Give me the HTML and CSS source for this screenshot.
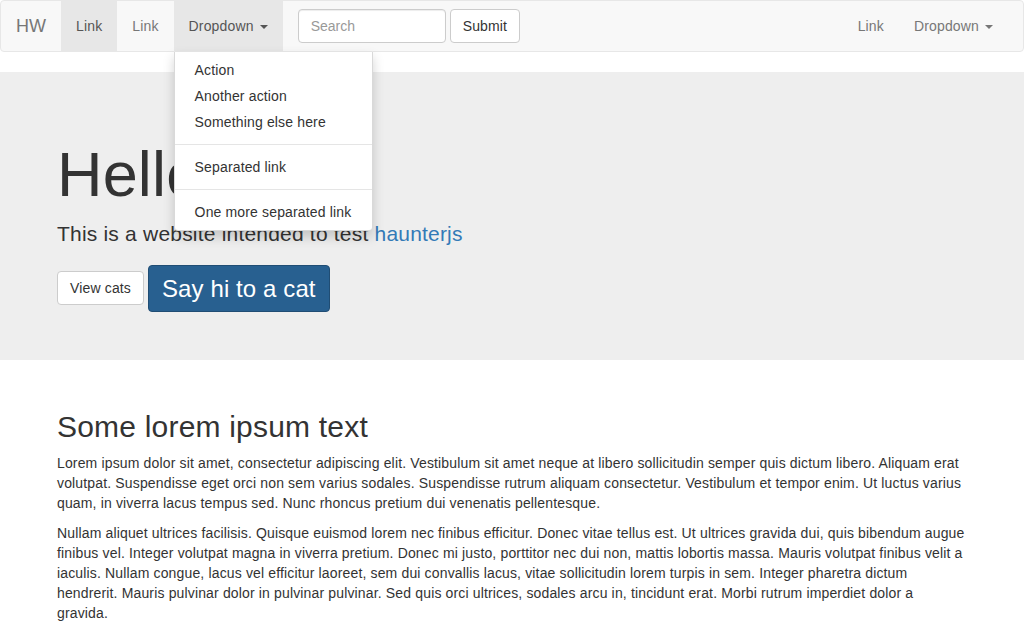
FILE: index.html
```html
<!DOCTYPE html>
<html lang="en">
<head>
<meta charset="utf-8">
<title>HW</title>
<link rel="stylesheet" href="styles.css">
</head>
<body>
<nav class="navbar">
  <a class="brand" href="#">HW</a>
  <ul class="nav">
    <li class="active"><a href="#">Link</a></li>
    <li><a href="#">Link</a></li>
    <li class="dropdown open">
      <a href="#">Dropdown <span class="caret"></span></a>
      <ul class="dropdown-menu">
        <li><a href="#">Action</a></li>
        <li><a href="#">Another action</a></li>
        <li><a href="#">Something else here</a></li>
        <li class="divider"></li>
        <li><a href="#">Separated link</a></li>
        <li class="divider"></li>
        <li><a href="#">One more separated link</a></li>
      </ul>
    </li>
  </ul>
  <form class="navbar-form">
    <input class="form-control" type="text" placeholder="Search">
    <button class="btn btn-default" type="submit">Submit</button>
  </form>
  <ul class="nav nav-right">
    <li><a href="#">Link</a></li>
    <li><a href="#">Dropdown <span class="caret"></span></a></li>
  </ul>
</nav>

<div class="jumbotron">
  <div class="container">
    <h1>Hello!</h1>
    <p class="lead">This is a website intended to test <a href="#">haunterjs</a></p>
    <div class="actions">
      <a class="btn btn-default" href="#">View cats</a>
      <a class="btn btn-primary btn-lg" href="#">Say hi to a cat</a>
    </div>
  </div>
</div>

<div class="container main">
  <h2>Some lorem ipsum text</h2>
  <p>Lorem ipsum dolor sit amet, consectetur adipiscing elit. Vestibulum sit amet neque at libero sollicitudin semper quis dictum libero. Aliquam erat volutpat. Suspendisse eget orci non sem varius sodales. Suspendisse rutrum aliquam consectetur. Vestibulum et tempor enim. Ut luctus varius quam, in viverra lacus tempus sed. Nunc rhoncus pretium dui venenatis pellentesque.</p>
  <p>Nullam aliquet ultrices facilisis. Quisque euismod lorem nec finibus efficitur. Donec vitae tellus est. Ut ultrices gravida dui, quis bibendum augue finibus vel. Integer volutpat magna in viverra pretium. Donec mi justo, porttitor nec dui non, mattis lobortis massa. Mauris volutpat finibus velit a iaculis. Nullam congue, lacus vel efficitur laoreet, sem dui convallis lacus, vitae sollicitudin lorem turpis in sem. Integer pharetra dictum hendrerit. Mauris pulvinar dolor in pulvinar pulvinar. Sed quis orci ultrices, sodales arcu in, tincidunt erat. Morbi rutrum imperdiet dolor a gravida.</p>
</div>
</body>
</html>
```

FILE: styles.css
```css
* { box-sizing: border-box; }
html, body { margin: 0; padding: 0; }
body {
  font-family: "Liberation Sans", Arial, Helvetica, sans-serif;
  font-size: 14px;
  line-height: 1.42857143;
  letter-spacing: 0.15px;
  color: #333;
  background: #fff;
}
a { text-decoration: none; }

/* Navbar */
.navbar {
  display: flex;
  align-items: stretch;
  height: 52px;
  background: #f8f8f8;
  border: 1px solid #e7e7e7;
  border-radius: 4px;
  margin-bottom: 20px;
  position: relative;
  z-index: 10;
}
.brand {
  display: block;
  height: 50px;
  padding: 15px;
  font-size: 18px;
  line-height: 20px;
  letter-spacing: 0;
  color: #777;
}
.nav {
  display: flex;
  list-style: none;
  margin: 0;
  padding: 0;
}
.nav > li { position: relative; }
.nav > li > a {
  display: block;
  padding: 15px;
  line-height: 20px;
  color: #777;
}
.nav > li.active > a,
.nav > li.open > a {
  color: #555;
  background: #e7e7e7;
}
.nav-right { margin-left: auto; margin-right: 15px; }
.caret {
  display: inline-block;
  width: 0;
  height: 0;
  margin-left: 2px;
  vertical-align: middle;
  border-top: 4px solid;
  border-left: 4px solid transparent;
  border-right: 4px solid transparent;
}

.navbar-form {
  display: flex;
  align-items: center;
  gap: 4px;
  margin: 0;
  padding: 0 15px;
}
.form-control {
  width: 148px;
  height: 34px;
  padding: 6px 12px;
  font: inherit;
  font-size: 14px;
  color: #555;
  background: #fff;
  border: 1px solid #ccc;
  border-radius: 4px;
  box-shadow: inset 0 1px 1px rgba(0,0,0,.075);
}
.form-control::placeholder { color: #999; }

.btn {
  display: inline-block;
  padding: 6px 12px;
  font-family: inherit;
  font-size: 14px;
  line-height: 20px;
  letter-spacing: inherit;
  border: 1px solid transparent;
  border-radius: 4px;
  cursor: pointer;
  white-space: nowrap;
}
.btn-default {
  color: #333;
  background: #fff;
  border-color: #ccc;
}
.btn-primary {
  color: #fff;
  background: #286090;
  border-color: #204d74;
}
.btn-lg {
  padding: 9px 13px;
  font-size: 24px;
  line-height: 27px;
  letter-spacing: 0.1px;
  border-radius: 4px;
}

/* Dropdown */
.dropdown-menu {
  position: absolute;
  top: 100%;
  left: 0;
  min-width: 199px;
  margin: 0;
  padding: 5px 0;
  list-style: none;
  background: #fff;
  border: 1px solid rgba(0,0,0,.15);
  border-top-color: #e3e3e3;
  border-radius: 0 0 4px 4px;
  box-shadow: 0 6px 12px rgba(0,0,0,.175);
}
.dropdown-menu > li > a {
  display: block;
  padding: 3px 20px;
  line-height: 20px;
  color: #333;
  white-space: nowrap;
}
.dropdown-menu .divider {
  height: 1px;
  margin: 9px 0;
  background: #e5e5e5;
}

/* Layout */
.container {
  width: 940px;
  margin: 0 auto;
  padding: 0 15px;
}
.main { display: flow-root; }

.jumbotron {
  background: #eee;
  padding: 48px 0;
  margin-bottom: 30px;
}
.jumbotron h1 {
  margin: 20px 0 10px;
  font-size: 63px;
  font-weight: 400;
  line-height: 1.1;
}
.jumbotron .lead {
  margin: 0 0 15px;
  font-size: 21px;
  line-height: 30px;
  letter-spacing: 0.2px;
}
.jumbotron .lead a { color: #337ab7; }
.actions {
  display: flex;
  align-items: center;
  gap: 4px;
  height: 48px;
}

h2 {
  margin: 20px 0 10px;
  font-size: 30px;
  font-weight: 400;
  line-height: 1.1;
  letter-spacing: 0.2px;
}
.container > p { margin: 0 0 10px; }
```
